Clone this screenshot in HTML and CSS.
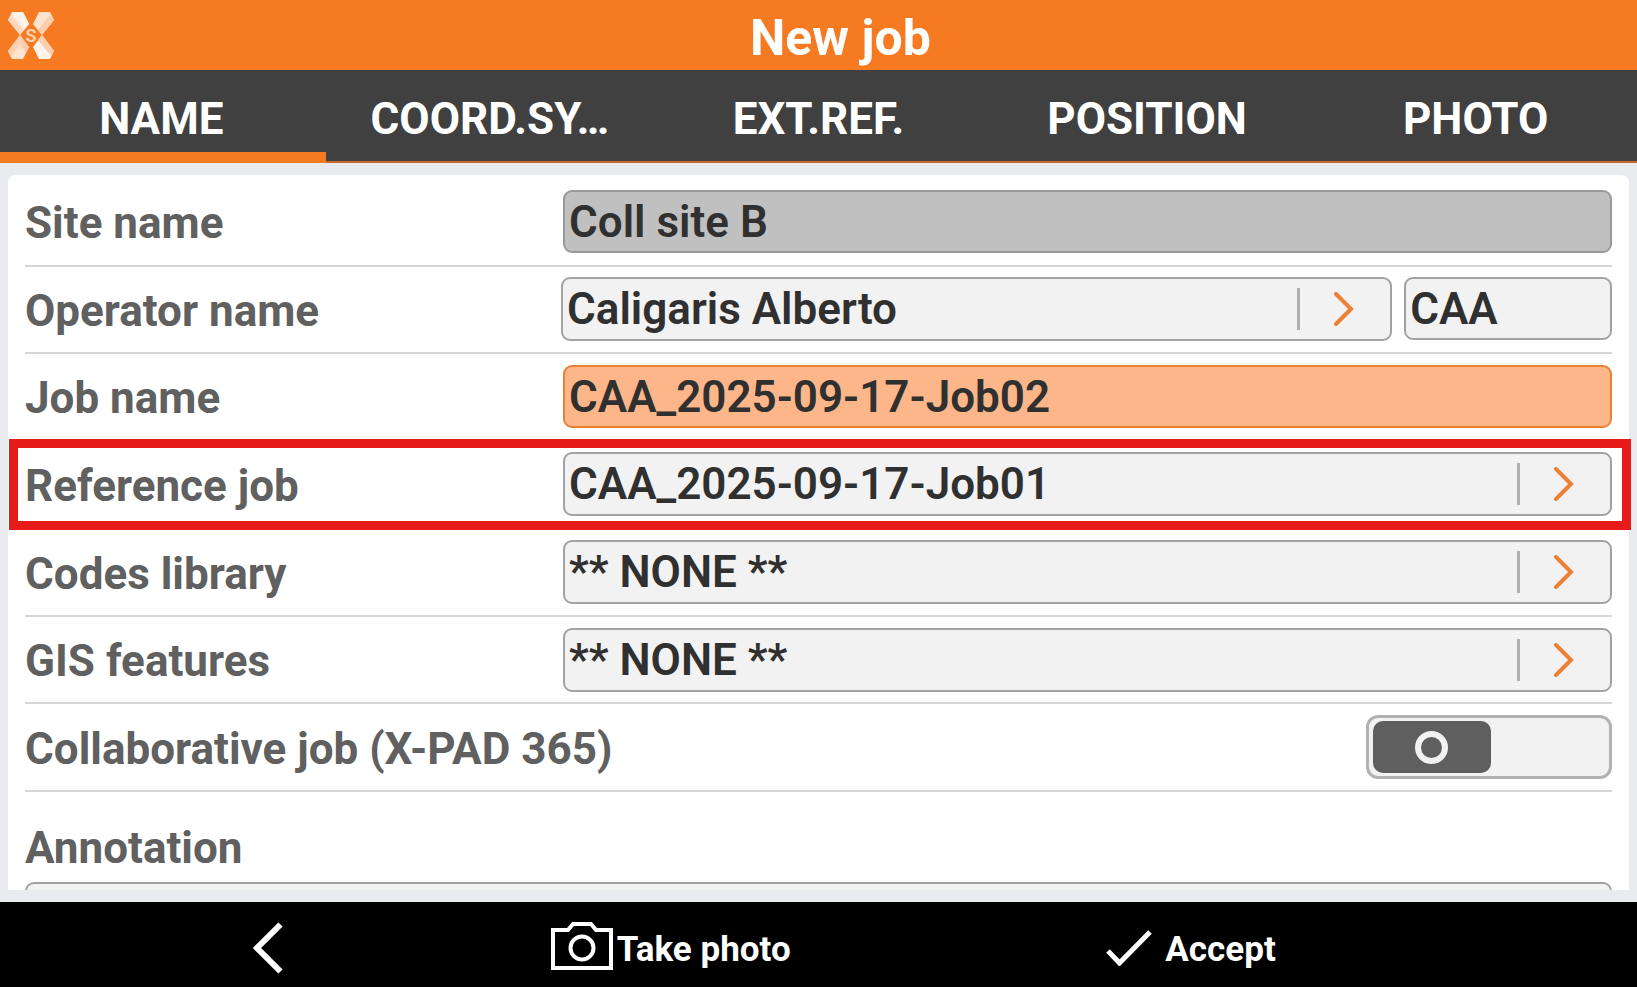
FILE: index.html
```html
<!DOCTYPE html>
<html lang="en">
<head>
<meta charset="utf-8">
<title>New job</title>
<link rel="stylesheet" href="styles.css">
</head>
<body>
<div class="app">
  <header class="header">
    <svg class="logo" viewBox="0 0 46 47" aria-hidden="true">
      <path fill="#ffe9da" d="M4 0H15L21 12 12 23 0 8Z"/>
      <path fill="#fff3ea" d="M4 0H15L21 12 17 17Z"/>
      <path fill="#fdd8bd" d="M0 8 4 4 15 19 12 23Z"/>
      <path fill="#ffe3d0" d="M12 23 21 35 15 47H4L0 39Z"/>
      <path fill="#fdceae" d="M12 23 21 35 18 41 9 28Z"/>
      <path fill="#fdd0b0" d="M0 39 9 27 12 32 3 45Z"/>
      <path fill="#ffe3d0" d="M31 0H42L46 8 34 23 25 12Z"/>
      <path fill="#fdceae" d="M46 8 34 23 30 18 42 3Z"/>
      <path fill="#fff3ea" d="M34 23 46 39 42 47H31L25 35Z"/>
      <path fill="#fdceae" d="M34 23 46 39 43 44 30 28Z"/>
      <text class="logo-letter" x="23" y="30" text-anchor="middle">S</text>
    </svg>
    <h1 class="title">New job</h1>
  </header>

  <nav class="tabs">
    <button class="tab tab-active" type="button">NAME</button>
    <button class="tab" type="button">COORD.SY…</button>
    <button class="tab" type="button">EXT.REF.</button>
    <button class="tab" type="button">POSITION</button>
    <button class="tab" type="button">PHOTO</button>
  </nav>

  <main class="content">
    <form class="card">
      <div class="rows">
        <div class="row">
          <label class="label" for="site">Site name</label>
          <input class="field field-disabled" id="site" type="text" value="Coll site B" readonly>
        </div>
        <div class="row">
          <label class="label" for="operator">Operator name</label>
          <div class="pair">
            <button class="field picker" id="operator" type="button">
              <span class="value">Caligaris Alberto</span>
              <svg class="arrow" viewBox="0 0 20 34" aria-hidden="true"><path d="M2 2 17 17 2 32"/></svg>
            </button>
            <input class="field" type="text" value="CAA" aria-label="Operator initials">
          </div>
        </div>
        <div class="row">
          <label class="label" for="job">Job name</label>
          <input class="field field-focus" id="job" type="text" value="CAA_2025-09-17-Job02">
        </div>
        <div class="row row-marked">
          <label class="label" for="reference">Reference job</label>
          <button class="field picker" id="reference" type="button">
            <span class="value">CAA_2025-09-17-Job01</span>
            <svg class="arrow" viewBox="0 0 20 34" aria-hidden="true"><path d="M2 2 17 17 2 32"/></svg>
          </button>
        </div>
        <div class="row">
          <label class="label" for="codes">Codes library</label>
          <button class="field picker" id="codes" type="button">
            <span class="value">** NONE **</span>
            <svg class="arrow" viewBox="0 0 20 34" aria-hidden="true"><path d="M2 2 17 17 2 32"/></svg>
          </button>
        </div>
        <div class="row">
          <label class="label" for="gis">GIS features</label>
          <button class="field picker" id="gis" type="button">
            <span class="value">** NONE **</span>
            <svg class="arrow" viewBox="0 0 20 34" aria-hidden="true"><path d="M2 2 17 17 2 32"/></svg>
          </button>
        </div>
        <div class="row row-toggle">
          <label class="label" for="collab">Collaborative job (X-PAD 365)</label>
          <input class="toggle" id="collab" type="checkbox">
        </div>
      </div>
      <div class="annotation">
        <label class="label" for="note">Annotation</label>
        <textarea class="field note" id="note"></textarea>
      </div>
    </form>
  </main>

  <footer class="footer">
    <button class="action action-back" type="button" aria-label="Back">
      <svg class="back-icon" viewBox="0 0 30 52" aria-hidden="true"><path d="M27.500 2.500 4 26 27.500 49.500"/></svg>
    </button>
    <button class="action action-photo" type="button">
      <svg class="camera-icon" viewBox="0 0 62 48" aria-hidden="true"><path d="M2 8H17L22 2H40L45 8H60V46H2Z"/><circle cx="31" cy="26" r="11.500"/></svg>
      <span class="action-text">Take photo</span>
    </button>
    <button class="action action-accept" type="button">
      <svg class="check-icon" viewBox="0 0 46 36" aria-hidden="true"><path d="M2 21 13.500 33 44 2"/></svg>
      <span class="action-text">Accept</span>
    </button>
  </footer>
</div>
</body>
</html>
```

FILE: styles.css
```css
*,
*::before,
*::after {
  box-sizing: border-box;
}

body {
  margin: 0;
  font-family: Roboto, "Liberation Sans", sans-serif;
  font-weight: 700;
  font-size: 44px;
  line-height: 52px;
  background: #e9ebef;
}

button,
input,
textarea {
  font: inherit;
  margin: 0;
}

.app {
  display: flex;
  flex-direction: column;
  height: 100vh;
  overflow: hidden;
}

.header {
  display: grid;
  grid-template-columns: 46px 1fr;
  align-items: center;
  height: 70px;
  flex: none;
  padding: 0 10px 0 8px;
  background: #f67a22;
}

.logo {
  width: 46px;
  height: 47px;
}

.logo-letter {
  font-size: 18px;
  fill: #fdd0b0;
}

.title {
  margin: 0;
  padding-top: 5px;
  font-size: 50px;
  line-height: 60px;
  text-align: center;
  color: #fff;
}

.tabs {
  display: flex;
  flex: none;
  height: 93px;
  margin: 0 -3px;
  background: #404040;
  border-bottom: 2px solid #c76a2c;
}

.tab {
  flex: 1 1 0;
  min-width: 0;
  padding: 6px 0 0;
  border: 0;
  background: none;
  color: #fff;
  text-align: center;
  white-space: nowrap;
}

.tab-active {
  padding-bottom: 2px;
  margin-bottom: -2px;
  box-shadow: inset 0 -11px #f67a22;
}

.content {
  display: flex;
  flex: 1;
  min-height: 0;
  padding: 12px 8px;
}

.card {
  display: flex;
  flex-direction: column;
  flex: 1;
  padding: 4px 17px 0;
  background: #fff;
  border-radius: 8px 8px 0 0;
}

.rows {
  display: grid;
  grid-auto-rows: 1fr;
  flex: 1;
}

.row {
  display: grid;
  grid-template-columns: 538px 1fr;
  align-items: center;
  border-bottom: 2px solid #d6d6d6;
}

.row-toggle {
  grid-template-columns: 1fr 246px;
}

.row-marked {
  position: relative;
  border-bottom-color: transparent;
}

.row-marked::after {
  content: "";
  position: absolute;
  inset: -3px -19px -3px -16px;
  border: 9px solid #e81b1b;
  pointer-events: none;
}

.label {
  padding-top: 3px;
  color: #606060;
  white-space: nowrap;
}

.pair {
  display: grid;
  grid-template-columns: 4fr 1fr;
  gap: 12px;
  margin-left: -2px;
}

.field {
  display: block;
  width: 100%;
  min-width: 0;
  height: 63px;
  padding: 0 4px;
  border: 2px solid #a2a2a2;
  border-radius: 9px;
  background: #f2f2f2;
  color: #303030;
  font-weight: 600;
  text-align: left;
  outline: 0;
}

.field-disabled {
  background: #c0c0c0;
  border-color: #999;
}

.field-focus {
  background: #fcb68a;
  border-color: #ec8035;
}

.picker {
  display: flex;
  align-items: center;
  height: 64px;
}

.value {
  flex: 1;
}

.arrow {
  box-sizing: content-box;
  width: 20px;
  height: 34px;
  padding: 4px 32px 4px 34px;
  border-left: 3px solid #b0b0b0;
  fill: none;
  stroke: #ec8035;
  stroke-width: 4;
  stroke-linecap: round;
}

.toggle {
  appearance: none;
  display: grid;
  align-items: center;
  height: 64px;
  padding: 0 4px;
  border: 3px solid #b2b2b2;
  border-radius: 12px;
  background: #f2f2f2;
}

.toggle::before {
  content: "";
  grid-area: 1 / 1;
  width: 118px;
  height: 52px;
  border-radius: 10px;
  background: #5f5f5f;
}

.toggle::after {
  content: "";
  grid-area: 1 / 1;
  width: 33px;
  height: 33px;
  margin-left: 42px;
  border: 6px solid #f2f2f2;
  border-radius: 50%;
}

.toggle:checked::before {
  justify-self: end;
}

.annotation {
  flex: none;
  height: 98px;
  padding-top: 30px;
  overflow: hidden;
}

.annotation .label {
  display: block;
  padding: 0;
  margin-bottom: 8px;
}

.note {
  resize: none;
}

.footer {
  display: grid;
  grid-template-columns: repeat(3, 1fr);
  flex: none;
  height: 85px;
  background: #000;
}

.action {
  display: flex;
  align-items: center;
  padding: 6px 0 0;
  border: 0;
  background: none;
  color: #fff;
  font-size: 35px;
  line-height: 44px;
}

.action svg {
  flex: none;
  fill: none;
  stroke: #fff;
}

.action-text {
  padding-top: 4px;
}

.action-back {
  justify-content: center;
  padding-right: 10px;
}

.action-photo {
  gap: 4px;
  padding-left: 5px;
}

.action-photo svg {
  margin-bottom: 4px;
}

.action-accept {
  gap: 13px;
  padding-left: 15px;
}

.back-icon {
  width: 30px;
  height: 52px;
  stroke-width: 6;
}

.camera-icon {
  width: 62px;
  height: 48px;
  stroke-width: 4;
}

.check-icon {
  width: 46px;
  height: 36px;
  stroke-width: 5;
}
```
